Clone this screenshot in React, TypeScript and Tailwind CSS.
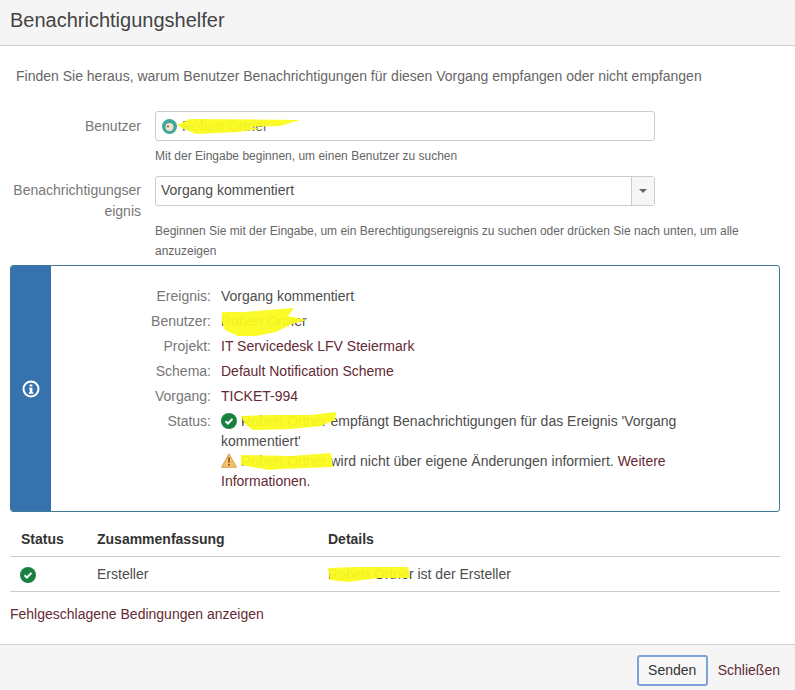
const LINK = 'text-[#642a33]';
const LABEL = 'text-[#777]';

/** Yellow marker scribble lying over a redacted name. */
function Scribble({ className, d, width, height }: { className: string; d: string; width: number; height: number }) {
  return (
    <svg className={`absolute pointer-events-none opacity-95 ${className}`} width={width} height={height} viewBox={`0 0 ${width} ${height}`}>
      <path d={d} fill="#fbfb1e" />
    </svg>
  );
}

function CheckIcon() {
  return (
    <svg className="shrink-0" width="16" height="16" viewBox="0 0 16 16">
      <circle cx="8" cy="8" r="8" fill="#1a8040" />
      <path d="M4.5 8.3l2.4 2.2 4.6-4.6" fill="none" stroke="#fff" strokeWidth="2" />
    </svg>
  );
}

function WarnIcon() {
  return (
    <svg className="shrink-0" width="16" height="15" viewBox="0 0 16 15">
      <path d="M8 .8L15.4 14.2H.6z" fill="#f6c26b" stroke="#d99a45" strokeWidth="1" strokeLinejoin="round" />
      <path d="M7.2 4.6h1.6l-.2 5.4H7.4zM7.2 11h1.6v1.6H7.2z" fill="#6b4a20" />
    </svg>
  );
}

function Row({ label, children }: { label: string; children: React.ReactNode }) {
  return (
    <div className="flex leading-[25px]">
      <div className={`w-[170px] shrink-0 pr-[10px] text-right ${LABEL}`}>{label}:</div>
      <div className="flex-1 min-w-0">{children}</div>
    </div>
  );
}

export default function App() {
  return (
    <div className="w-[795px] h-[690px] flex flex-col bg-white text-[14px] text-[#4d4d4d] overflow-hidden font-['Liberation_Sans',Arial,sans-serif]">
      <header className="h-[46px] shrink-0 bg-[#f5f5f5] border-b border-[#cfcfcf] px-[10px] pb-[5px] flex items-center">
        <h1 className="text-[20px] text-[#444] leading-[40px]">Benachrichtigungshelfer</h1>
      </header>

      <main className="flex-1 min-h-0 px-[10px] pr-[15px]">
        <p className="pl-[6px] pt-[20px] leading-5 text-[#666]">
          Finden Sie heraus, warum Benutzer Benachrichtigungen für diesen Vorgang empfangen oder nicht empfangen
        </p>

        <div className="flex mt-[25px]">
          <div className={`w-[131px] shrink-0 text-right leading-5 pt-[5px] ${LABEL}`}>Benutzer</div>
          <div className="ml-[14px] w-[500px]">
            <div className="relative h-[30px] border border-[#ccc] rounded-[3px] flex items-center pl-[6px]">
              <svg width="15" height="15" viewBox="0 0 15 15" className="shrink-0">
                <circle cx="7.5" cy="7.5" r="7.5" fill="#3fa89a" />
                <circle cx="7.5" cy="8" r="4" fill="#f3e3c8" />
                <circle cx="6" cy="7.5" r="1" fill="#8a4a20" />
              </svg>
              <span className="ml-[5px] text-[#666]">Robert Ortner</span>
              <Scribble
                className="left-[20px] top-[5px]"
                width={126}
                height={18}
                d="M1 8 L14 2 L124 3 L104 9 L74 10 L84 12 L62 15 L20 17 L8 12z"
              />
            </div>
            <p className="mt-[5px] text-[12px] leading-5 text-[#666]">Mit der Eingabe beginnen, um einen Benutzer zu suchen</p>
          </div>
        </div>

        <div className="flex mt-[10px]">
          <div className={`w-[131px] shrink-0 text-right leading-[21px] pt-[4px] break-all ${LABEL}`}>Benachrichtigungsereignis</div>
          <div className="ml-[14px] flex-1">
            <div className="w-[500px] h-[30px] border border-[#ccc] rounded-[3px] flex items-stretch">
              <div className="flex-1 pl-[5px] leading-[27px]">Vorgang kommentiert</div>
              <div className="w-[23px] border-l border-[#ccc] bg-[#f6f6f6] flex items-center justify-center">
                <span className="block w-0 h-0 border-x-[4px] border-x-transparent border-t-[4px] border-t-[#666]" />
              </div>
            </div>
            <p className="mt-[15px] text-[12px] leading-5 text-[#666]">
              Beginnen Sie mit der Eingabe, um ein Berechtigungsereignis zu suchen oder drücken Sie nach unten, um alle anzuzeigen
            </p>
          </div>
        </div>

        <section className="mt-[4px] h-[247px] w-[770px] border border-[#3f7a96] rounded-[3px] flex overflow-hidden">
          <div className="w-[40px] shrink-0 bg-[#3572ae] flex items-center justify-center">
            <svg width="18" height="18" viewBox="0 0 18 18">
              <circle cx="9" cy="9" r="7.5" fill="none" stroke="#fff" strokeWidth="2" />
              <path d="M7.6 4.4h2.8v2.2H7.6zM7.2 7.8h3.2v4.4h.9v1.5H6.8v-1.5h.9V9.3h-.5z" fill="#fff" />
            </svg>
          </div>
          <div className="flex-1 pt-[18px] pr-[60px]">
            <Row label="Ereignis">Vorgang kommentiert</Row>
            <Row label="Benutzer">
              <span className="relative inline-block">
                Robert Ortner
                <Scribble
                  className="left-[-1px] top-[-1px]"
                  width={88}
                  height={29}
                  d="M2 4 L24 4 L48 2 L74 0 L68 8 L87 12 L72 16 L56 24 L36 28 L18 28 L5 22 L2 14z"
                />
              </span>
            </Row>
            <Row label="Projekt"><span className={LINK}>IT Servicedesk LFV Steiermark</span></Row>
            <Row label="Schema"><span className={LINK}>Default Notification Scheme</span></Row>
            <Row label="Vorgang"><span className={LINK}>TICKET-994</span></Row>
            <div className="flex">
              <div className={`w-[170px] shrink-0 pr-[10px] text-right leading-[25px] ${LABEL}`}>Status:</div>
              <div className="flex-1 min-w-0 pt-[2px] leading-5">
                <div>
                  <span className="inline-flex items-center align-[-3px] mr-[4px]"><CheckIcon /></span>
                  <span className="relative inline-block">
                    Robert Ortner
                    <Scribble
                      className="left-0 top-[1px]"
                      width={96}
                      height={19}
                      d="M0 4 L30 3 L70 3 L95 0 L94 8 L80 14 L50 17 L12 18 L4 12z"
                    />
                  </span>{' '}
                  empfängt Benachrichtigungen für das Ereignis 'Vorgang
                </div>
                <div>kommentiert'</div>
                <div>
                  <span className="inline-flex items-center align-[-2px] mr-[4px]"><WarnIcon /></span>
                  <span className="relative inline-block">
                    Robert Ortner
                    <Scribble
                      className="left-0 top-[2px]"
                      width={92}
                      height={18}
                      d="M0 2 L50 3 L90 0 L92 14 L40 16 L28 17 L0 12z"
                    />
                  </span>{' '}
                  wird nicht über eigene Änderungen informiert. <span className={LINK}>Weitere</span>
                </div>
                <div className={LINK}>Informationen.</div>
              </div>
            </div>
          </div>
        </section>

        <table className="mt-[9px] w-[770px] border-collapse table-fixed">
          <thead>
            <tr className="border-b border-[#ccc]">
              <th className="w-[87px] h-[35px] pl-[11px] pt-[2px] text-left font-bold text-[#333]">Status</th>
              <th className="w-[231px] pt-[2px] text-left font-bold text-[#333]">Zusammenfassung</th>
              <th className="pt-[2px] text-left font-bold text-[#333]">Details</th>
            </tr>
          </thead>
          <tbody>
            <tr className="border-b border-[#ccc]">
              <td className="h-[35px] pl-[10px] pt-[2px]"><CheckIcon /></td>
              <td className="pt-[2px]">Ersteller</td>
              <td className="pt-[2px]">
                <span className="relative inline-block">
                  Robert Ortner
                  <Scribble
                    className="left-0 top-[3px]"
                    width={83}
                    height={16}
                    d="M0 1 L30 0 L80 0 L82 11 L50 11 L20 15 L2 13z"
                  />
                </span>{' '}
                ist der Ersteller
              </td>
            </tr>
          </tbody>
        </table>

        <p className={`mt-[12px] leading-5 ${LINK}`}>Fehlgeschlagene Bedingungen anzeigen</p>
      </main>

      <footer className="h-[46px] shrink-0 bg-[#f5f5f5] border-t border-[#cfcfcf] pt-[5px] flex items-center justify-end pr-[15px]">
        <button className="h-[31px] w-[71px] bg-[#f7f7f7] border-2 border-[#7fa3d8] rounded-[3px] text-[#333]">Senden</button>
        <a className={`ml-[10px] ${LINK}`}>Schließen</a>
      </footer>
    </div>
  );
}
